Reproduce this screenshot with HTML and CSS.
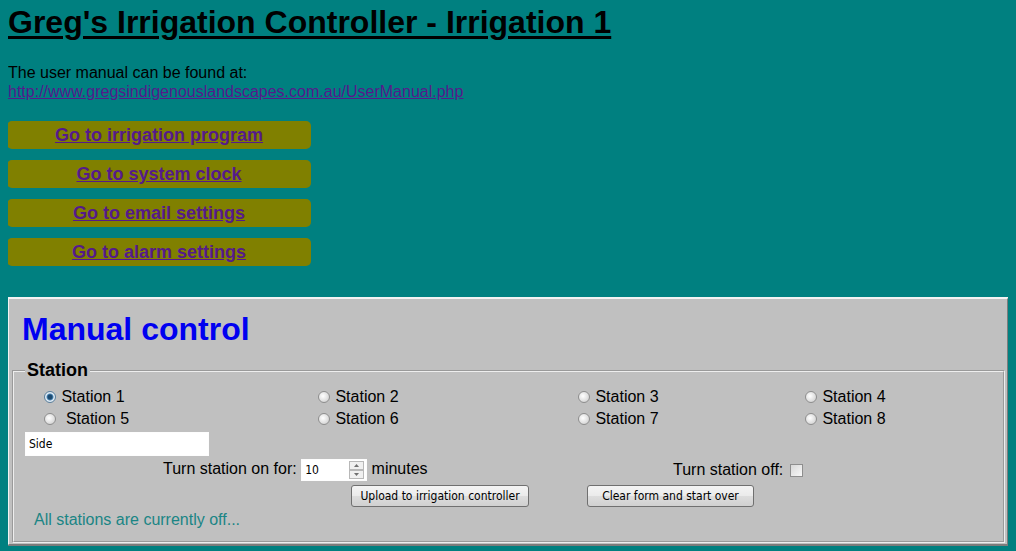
FILE: index.html
```html
<!DOCTYPE html>
<html>
<head>
<meta charset="utf-8">
<title>Greg's Irrigation Controller</title>
<link rel="stylesheet" href="styles.css">
</head>
<body>
<h1 class="title">Greg's Irrigation Controller - Irrigation 1</h1>
<p class="intro">The user manual can be found at:<br><a class="manual-link" href="#">http://www.gregsindigenouslandscapes.com.au/UserManual.php</a></p>
<nav class="menu">
  <a class="menu-btn" href="#">Go to irrigation program</a>
  <a class="menu-btn" href="#">Go to system clock</a>
  <a class="menu-btn" href="#">Go to email settings</a>
  <a class="menu-btn" href="#">Go to alarm settings</a>
</nav>
<section class="panel">
  <h2 class="panel-title">Manual control</h2>
  <form class="manual-form">
    <fieldset class="station-set">
      <legend class="station-legend">Station</legend>
      <div class="stations">
        <label class="station"><input class="radio" type="radio" name="st" checked> Station 1</label>
        <label class="station"><input class="radio" type="radio" name="st"> Station 2</label>
        <label class="station"><input class="radio" type="radio" name="st"> Station 3</label>
        <label class="station"><input class="radio" type="radio" name="st"> Station 4</label>
        <label class="station"><input class="radio" type="radio" name="st"> &nbsp;Station 5</label>
        <label class="station"><input class="radio" type="radio" name="st"> Station 6</label>
        <label class="station"><input class="radio" type="radio" name="st"> Station 7</label>
        <label class="station"><input class="radio" type="radio" name="st"> Station 8</label>
      </div>
      <input class="name-input" type="text" value="Side">
      <div class="timer-row">
        <span class="on-group">Turn station on for: <span class="num-wrap"><input class="num-input" type="number" value="10"><span class="spin"><svg width="15" height="18" viewBox="0 0 15 18"><rect x="0.5" y="0.5" width="14" height="8" fill="#f0f0f0" stroke="#b8b8b8"/><rect x="0.5" y="9.5" width="14" height="8" fill="#f0f0f0" stroke="#b8b8b8"/><path d="M5 6 L7.5 3 L10 6 Z" fill="#707070"/><path d="M5 12 L10 12 L7.5 15 Z" fill="#707070"/></svg></span></span> minutes</span>
        <span class="off-group">Turn station off: <input class="check" type="checkbox"></span>
      </div>
      <div class="btn-row">
        <button class="btn btn-upload" type="button">Upload to irrigation controller</button>
        <button class="btn btn-clear" type="button">Clear form and start over</button>
      </div>
      <p class="status">All stations are currently off...</p>
    </fieldset>
  </form>
</section>
</body>
</html>
```
FILE: styles.css
```css
html, body {
  background: #008080;
}
body {
  margin: 0 8px;
  font-family: "Liberation Sans", Arial, sans-serif;
  font-size: 16px;
  color: #000;
}
.title {
  margin: 4px 0 22px;
  font-size: 32px;
  line-height: 37px;
  font-weight: bold;
  text-decoration: underline;
  text-decoration-thickness: 3px;
  text-underline-offset: 3px;
}
.intro {
  margin: 0;
  line-height: 19px;
}
.manual-link {
  color: #551a8b;
}
.menu {
  display: flex;
  flex-direction: column;
  gap: 11px;
  width: 304px;
  margin: 20px 0 0 -1px;
}
.menu-btn {
  display: block;
  height: 28px;
  line-height: 28px;
  background: #808000;
  border-radius: 5px;
  text-align: center;
  font-size: 18px;
  font-weight: bold;
  color: #551a8b;
}
.panel {
  margin: 31px -1px 0 -1px;
  border: 2px solid;
  border-color: #f2f2f2 #7c7c7c #7c7c7c #f2f2f2;
  background: #c0c0c0;
  padding: 0 2px 1px 3px;
}
.panel-title {
  margin: 12px 0 12px 10px;
  font-size: 32px;
  line-height: 37px;
  font-weight: bold;
  color: #0000f0;
}
.manual-form {
  margin: 0;
}
.station-set {
  margin: 0;
  border: 2px groove #eeeeee;
  padding: 5px 12px 12px;
}
.station-legend {
  padding: 0 2px;
  margin-left: -1px;
  font-size: 18px;
  line-height: 21px;
  font-weight: bold;
}
.stations {
  display: grid;
  grid-template-columns: 274px 260px 227px 1fr;
  margin-left: 18px;
}
.station {
  line-height: 22px;
  white-space: nowrap;
}
.radio {
  appearance: none;
  -webkit-appearance: none;
  box-sizing: border-box;
  width: 12px;
  height: 12px;
  margin: 0 1px 0 0;
  border: 1px solid #8e8e8e;
  border-radius: 50%;
  background: radial-gradient(circle at 40% 40%, #ffffff, #d6d6d6 75%);
  vertical-align: -1px;
}
.radio:checked {
  border-color: #5a7f9c;
  background: radial-gradient(circle, #1c4a70 0 2px, #4d86b4 3px, #e8f2fa 4px, #cfd9e2 6px);
}
.name-input {
  display: block;
  box-sizing: border-box;
  width: 184px;
  height: 24px;
  margin: 2px 0 0 -1px;
  padding: 0 3px;
  border: 1px solid #fdfdfd;
  background: #fff;
  font-family: "DejaVu Sans Condensed", "DejaVu Sans", sans-serif;
  font-size: 12px;
  color: #000;
}
.timer-row {
  display: grid;
  grid-template-columns: 510px auto;
  align-items: center;
  height: 24px;
  margin-top: 2px;
  padding-left: 137px;
}
.on-group, .off-group {
  white-space: nowrap;
}
.num-wrap {
  position: relative;
  display: inline-block;
  vertical-align: middle;
}
.num-input {
  display: block;
  box-sizing: border-box;
  width: 66px;
  height: 22px;
  margin: 0;
  padding: 0 3px;
  border: 1px solid #fdfdfd;
  background: #fff;
  font-family: "DejaVu Sans Condensed", "DejaVu Sans", sans-serif;
  font-size: 12px;
  -moz-appearance: textfield;
}
.num-input::-webkit-inner-spin-button,
.num-input::-webkit-outer-spin-button {
  -webkit-appearance: none;
  margin: 0;
}
.spin {
  position: absolute;
  right: 3px;
  top: 2px;
  width: 15px;
  height: 18px;
  line-height: 0;
}
.check {
  appearance: none;
  -webkit-appearance: none;
  box-sizing: border-box;
  width: 13px;
  height: 13px;
  margin: 0 0 0 2px;
  border: 1px solid #8e8e8e;
  background: linear-gradient(135deg, #d8d8d8, #f8f8f8);
  vertical-align: -2px;
}
.btn-row {
  display: flex;
  gap: 58px;
  margin: 3px 0 0 325px;
}
.btn {
  box-sizing: border-box;
  height: 22px;
  padding: 0 6px;
  border: 1px solid #707070;
  border-radius: 3px;
  background: linear-gradient(#f4f4f4, #ebebeb 48%, #dddddd 52%, #d0d0d0);
  font-family: "DejaVu Sans Condensed", "DejaVu Sans", sans-serif;
  font-size: 12px;
  color: #000;
}
.btn-upload {
  width: 178px;
}
.btn-clear {
  width: 167px;
}
.status {
  margin: 4px 0 0 8px;
  line-height: 18px;
  color: #1a8585;
}
```
